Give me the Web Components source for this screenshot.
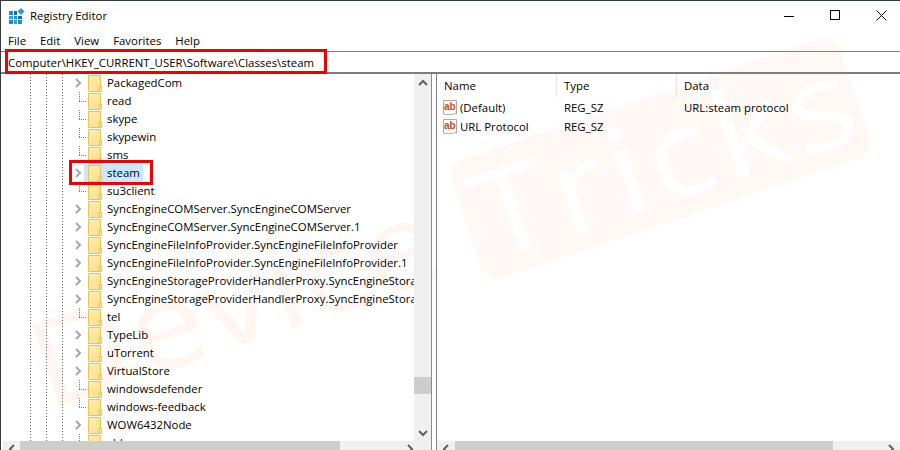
<!DOCTYPE html>
<html>
<head>
<meta charset="utf-8">
<title>Registry Editor</title>
<style>
  html, body { margin: 0; padding: 0; background: #fff; }
  body { font-family: "Open Sans", "Noto Sans", sans-serif; font-size: 11.4px; color: #000; }
</style>
</head>
<body>
<reg-window>
  <reg-watermark slot="watermark"></reg-watermark>
  <reg-titlebar slot="title" text="Registry Editor"></reg-titlebar>
  <reg-menubar slot="menu" items="File,Edit,View,Favorites,Help"></reg-menubar>
  <reg-address slot="address" path="Computer\HKEY_CURRENT_USER\Software\Classes\steam"></reg-address>
  <reg-tree slot="tree">
    <reg-tree-row expandable label="PackagedCom"></reg-tree-row>
    <reg-tree-row label="read"></reg-tree-row>
    <reg-tree-row label="skype"></reg-tree-row>
    <reg-tree-row label="skypewin"></reg-tree-row>
    <reg-tree-row label="sms"></reg-tree-row>
    <reg-tree-row expandable selected label="steam"></reg-tree-row>
    <reg-tree-row label="su3client"></reg-tree-row>
    <reg-tree-row expandable label="SyncEngineCOMServer.SyncEngineCOMServer"></reg-tree-row>
    <reg-tree-row expandable label="SyncEngineCOMServer.SyncEngineCOMServer.1"></reg-tree-row>
    <reg-tree-row expandable label="SyncEngineFileInfoProvider.SyncEngineFileInfoProvider"></reg-tree-row>
    <reg-tree-row expandable label="SyncEngineFileInfoProvider.SyncEngineFileInfoProvider.1"></reg-tree-row>
    <reg-tree-row expandable label="SyncEngineStorageProviderHandlerProxy.SyncEngineStorageProviderHandlerProxy"></reg-tree-row>
    <reg-tree-row expandable label="SyncEngineStorageProviderHandlerProxy.SyncEngineStorageProviderHandlerProxy.1"></reg-tree-row>
    <reg-tree-row label="tel"></reg-tree-row>
    <reg-tree-row expandable label="TypeLib"></reg-tree-row>
    <reg-tree-row expandable label="uTorrent"></reg-tree-row>
    <reg-tree-row expandable label="VirtualStore"></reg-tree-row>
    <reg-tree-row label="windowsdefender"></reg-tree-row>
    <reg-tree-row label="windows-feedback"></reg-tree-row>
    <reg-tree-row expandable label="WOW6432Node"></reg-tree-row>
    <reg-tree-row label="xbl"></reg-tree-row>
  </reg-tree>
  <reg-list slot="list">
    <reg-list-row name="(Default)" type="REG_SZ" data="URL:steam protocol"></reg-list-row>
    <reg-list-row name="URL Protocol" type="REG_SZ"></reg-list-row>
  </reg-list>
  <reg-callout slot="callouts" style="left:5px;top:49px;width:322px;height:25px"></reg-callout>
  <reg-callout slot="callouts" style="left:69px;top:160px;width:84px;height:25px"></reg-callout>
</reg-window>

<script>
const chevrons = {
    up: '<path d="M4 10 L8 6 L12 10"/>',
    down: '<path d="M4 6 L8 10 L12 6"/>',
    left: '<path d="M10 4 L6 8 L10 12"/>',
    right: '<path d="M6 4 L10 8 L6 12"/>'
};

class RegWindow extends HTMLElement {
    constructor() {
        super();
        this.attachShadow({ mode: 'open' }).innerHTML = `
        <style>
            :host { display: block; position: relative; width: 900px; height: 450px; overflow: hidden; background: #fff; }
            .frame { position: relative; display: flex; flex-direction: column; height: 450px; box-sizing: border-box; border-top: 1px solid #2f3b3b; border-left: 1px solid #3a3a3a; }
            .panes { display: flex; height: 376px; }
            .left { display: grid; grid-template-columns: 413px 17px; grid-template-rows: 367px 9px; width: 430px; border-right: 1px solid #8a8a92; overflow: hidden; }
            .gutter { width: 4px; }
            .right { display: grid; grid-template-columns: minmax(0, 1fr); grid-template-rows: 367px 9px; flex: 1; min-width: 0; border-left: 1px solid #7f8088; overflow: hidden; }
            .vbar { grid-column: 2; grid-row: 1; }
            .hleft { margin-left: 2px; grid-column: 1; grid-row: 2; }
            .corner { grid-column: 2; grid-row: 2; background: #f0f0f0; }
        </style>
        <slot name="watermark"></slot>
        <div class="frame">
            <slot name="title"></slot>
            <slot name="menu"></slot>
            <slot name="address"></slot>
            <div class="panes">
                <div class="left">
                    <slot name="tree"></slot>
                    <reg-scrollbar class="vbar" dir="v" before="286" thumb="17" end="17"></reg-scrollbar>
                    <reg-scrollbar class="hleft" dir="h" before="0" thumb="320" start="17" end="9"></reg-scrollbar>
                    <div class="corner"></div>
                </div>
                <div class="gutter"></div>
                <div class="right">
                    <slot name="list"></slot>
                    <reg-scrollbar dir="h" before="0" thumb="378" start="18" end="18"></reg-scrollbar>
                </div>
            </div>
        </div>
        <slot name="callouts"></slot>`;
    }
}

class RegWatermark extends HTMLElement {
    constructor() {
        super();
        this.attachShadow({ mode: 'open' }).innerHTML = `
        <style>
            :host { position: absolute; inset: 0; display: block; pointer-events: none; }
            text { font-family: "Open Sans", sans-serif; font-size: 120px; font-weight: 500; }
        </style>
        <svg width="900" height="450" viewBox="0 0 900 450">
            <g transform="translate(47 410) rotate(-18.5)">
                <rect x="457" y="-106" width="409" height="125" rx="16" fill="#fff8f4"/>
                <g transform="scale(1.15 1)">
                    <text x="0" y="0" fill="#fff6f1">Device</text>
                    <text x="406" y="0" fill="#fff" textLength="343" lengthAdjust="spacing">Tricks</text>
                </g>
            </g>
        </svg>`;
    }
}

class RegTitlebar extends HTMLElement {
    constructor() {
        super();
        this.attachShadow({ mode: 'open' }).innerHTML = `
        <style>
            :host { display: flex; align-items: center; height: 29px; }
            .icon { margin: 0 5px 0 8px; flex: none; }
            .text { flex: 1; }
            .btns { display: flex; align-items: center; margin-right: -4px; }
            .btn { width: 46px; display: flex; justify-content: center; }
            svg { display: block; }
        </style>
        <svg class="icon" width="16" height="16" viewBox="0 0 16 16" shape-rendering="crispEdges">
            <g fill="#1b8ed6">
                <rect x="0" y="3" width="3.6" height="3.6"/><rect x="4.6" y="3" width="3.6" height="3.6" fill="#0f6fb4"/>
                <rect x="0" y="7.6" width="3.6" height="3.6" fill="#2aa2e6"/><rect x="4.6" y="7.6" width="3.6" height="3.6"/><rect x="9.2" y="7.6" width="3.6" height="3.6" fill="#0f6fb4"/>
                <rect x="0" y="12.2" width="3.6" height="3.6"/><rect x="4.6" y="12.2" width="3.6" height="3.6" fill="#2aa2e6"/><rect x="9.2" y="12.2" width="3.6" height="3.6"/>
            </g>
            <path d="M12 0 L15.5 3.5 L12 7 L8.5 3.5 Z" fill="#3a93cf" shape-rendering="auto"/>
        </svg>
        <span class="text"></span>
        <div class="btns">
            <div class="btn"><svg width="10" height="10" viewBox="0 0 10 10" shape-rendering="crispEdges"><path d="M0 5.5 H10" stroke="#000" fill="none"/></svg></div>
            <div class="btn"><svg width="11" height="11" viewBox="0 0 11 11" shape-rendering="crispEdges"><rect x="0.5" y="0.5" width="9" height="9" stroke="#000" fill="none"/></svg></div>
            <div class="btn"><svg width="11" height="11" viewBox="0 0 11 11"><path d="M0.5 0.5 L10.5 10.5 M10.5 0.5 L0.5 10.5" stroke="#000" fill="none"/></svg></div>
        </div>`;
        this.shadowRoot.querySelector('.text').textContent = this.getAttribute('text');
    }
}

class RegMenubar extends HTMLElement {
    constructor() {
        super();
        this.attachShadow({ mode: 'open' }).innerHTML = `
        <style>
            :host { display: flex; align-items: center; height: 21px; padding-left: 7px; gap: 14px; }
            span { padding-bottom: 1px; }
        </style>`;
        for (const item of this.getAttribute('items').split(',')) {
            const s = document.createElement('span');
            s.textContent = item;
            this.shadowRoot.appendChild(s);
        }
    }
}

class RegAddress extends HTMLElement {
    constructor() {
        super();
        this.attachShadow({ mode: 'open' }).innerHTML = `
        <style>
            :host { display: flex; align-items: center; box-sizing: border-box; height: 23px; padding-left: 7px; border-top: 1px solid #808080; border-bottom: 2px solid #7d7d7d; }
        </style>
        <span></span>`;
        this.shadowRoot.querySelector('span').textContent = this.getAttribute('path');
    }
}

class RegTree extends HTMLElement {
    constructor() {
        super();
        this.attachShadow({ mode: 'open' }).innerHTML = `
        <style>
            :host {
                display: block; overflow: hidden; height: 367px; grid-column: 1; grid-row: 1;
                background-image:
                    repeating-linear-gradient(to bottom, #707070 0 1px, transparent 1px 3px),
                    repeating-linear-gradient(to bottom, #707070 0 1px, transparent 1px 3px),
                    repeating-linear-gradient(to bottom, #707070 0 1px, transparent 1px 3px);
                background-size: 1px 100%;
                background-position: 29px 0, 45px 0, 61px 0;
                background-repeat: no-repeat;
            }
        </style>
        <slot></slot>`;
    }
}

class RegTreeRow extends HTMLElement {
    constructor() {
        super();
        this.attachShadow({ mode: 'open' }).innerHTML = `
        <style>
            :host { display: flex; height: 18px; white-space: nowrap; position: relative; padding-left: 83px; }
            .toggle { position: absolute; left: 69px; top: 1px; }
            .leaf { position: absolute; left: 78px; top: 0; width: 7px; height: 10px;
                    background-image: repeating-linear-gradient(to bottom, #808080 0 1px, transparent 1px 2px),
                                      repeating-linear-gradient(to right, #808080 0 1px, transparent 1px 2px);
                    background-size: 1px 100%, 100% 1px;
                    background-position: 0 0, 0 9px;
                    background-repeat: no-repeat; }
            .item { display: flex; align-items: center; height: 18px; padding: 0 3px 0 4px; }
            :host([selected]) .item { background: #cce8ff; }
            .folder { flex: none; display: block; margin-right: 5px; }
            span { padding-bottom: 2px; }
        </style>
        <svg class="toggle" width="16" height="16" viewBox="0 0 16 16" fill="none" stroke="#a6a6a6" stroke-width="2"><path d="M6 4 L10 8 L6 12"/></svg>
        <div class="leaf"></div>
        <div class="item">
            <svg class="folder" width="14" height="17" viewBox="0 0 14 17">
                <defs><linearGradient id="f" x1="0" y1="0" x2="1" y2="1"><stop offset="0" stop-color="#ffeeb0"/><stop offset="1" stop-color="#fcdf85"/></linearGradient></defs>
                <path d="M0.5 0.5 H12.5 V11 H13.5 V16.5 H0.5 Z" fill="url(#f)" stroke="#e8c25a"/>
                <path d="M11 16 V11.5 H13" fill="none" stroke="#e8c25a"/>
            </svg>
            <span></span>
        </div>`;
        this.shadowRoot.querySelector('span').textContent = this.getAttribute('label');
        const exp = this.hasAttribute('expandable');
        this.shadowRoot.querySelector('.toggle').style.display = exp ? 'block' : 'none';
        this.shadowRoot.querySelector('.leaf').style.display = exp ? 'none' : 'block';
    }
}

class RegList extends HTMLElement {
    constructor() {
        super();
        this.attachShadow({ mode: 'open' }).innerHTML = `
        <style>
            :host { display: block; height: 367px; overflow: hidden; }
            .head { display: grid; grid-template-columns: 120px 120px 1fr; height: 23px; }
            .head span { display: flex; align-items: center; padding-left: 7px; border-right: 1px solid #e5e5e5; box-sizing: border-box; }
            .head span:last-child { border-right: 0; }
            .rows { margin-top: 1px; }
        </style>
        <div class="head"><span>Name</span><span>Type</span><span>Data</span></div>
        <div class="rows"><slot></slot></div>`;
    }
}

class RegListRow extends HTMLElement {
    constructor() {
        super();
        this.attachShadow({ mode: 'open' }).innerHTML = `
        <style>
            :host { display: grid; grid-template-columns: 120px 120px 1fr; height: 19px; align-items: center; white-space: nowrap; }
            .name { display: flex; align-items: center; padding-left: 5px; gap: 2px; }
            .type, .data { padding-left: 7px; }
            svg { display: block; flex: none; }
            text { font-family: "Liberation Sans", sans-serif; font-weight: bold; font-size: 10px; fill: #d5431c; }
        </style>
        <div class="name">
            <svg width="16" height="16" viewBox="0 0 16 16">
                <path d="M1.5 0.5 H14.5 V14 C12 12.5 11 15.5 8 14.5 C5 13.5 4 15.5 1.5 14 Z" fill="#fff" stroke="#a9a9a9"/>
                <text x="2" y="10">ab</text>
            </svg>
            <span class="n"></span>
        </div>
        <div class="type"></div>
        <div class="data"></div>`;
        this.shadowRoot.querySelector('.n').textContent = this.getAttribute('name');
        this.shadowRoot.querySelector('.type').textContent = this.getAttribute('type');
        this.shadowRoot.querySelector('.data').textContent = this.getAttribute('data') || '';
    }
}

class RegScrollbar extends HTMLElement {
    constructor() {
        super();
        const v = this.getAttribute('dir') === 'v';
        const start = this.getAttribute('start') || 17;
        const end = this.getAttribute('end') || 17;
        this.attachShadow({ mode: 'open' }).innerHTML = `
        <style>
            :host { display: flex; flex-direction: ${v ? 'column' : 'row'}; background: #f0f0f0; overflow: hidden; }
            .btn { flex: none; display: flex; align-items: ${v ? 'center' : 'flex-start'}; justify-content: center; ${v ? 'height' : 'width'}: ${start}px; }
            .btn.end { ${v ? 'height' : 'width'}: ${end}px; }
            .before { flex: none; ${v ? 'height' : 'width'}: ${this.getAttribute('before')}px; }
            .thumb { flex: none; background: #cdcdcd; ${v ? 'height' : 'width'}: ${this.getAttribute('thumb')}px; }
            .rest { flex: 1; }
            svg { display: block; flex: none; fill: none; stroke: #606060; stroke-width: 2; }
        </style>
        <div class="btn"><svg width="16" height="16" viewBox="0 0 16 16">${v ? chevrons.up : chevrons.left}</svg></div>
        <div class="before"></div>
        <div class="thumb"></div>
        <div class="rest"></div>
        <div class="btn end"><svg width="16" height="16" viewBox="0 0 16 16">${v ? chevrons.down : chevrons.right}</svg></div>`;
    }
}

class RegCallout extends HTMLElement {
    constructor() {
        super();
        this.attachShadow({ mode: 'open' }).innerHTML = `
        <style>
            :host { position: absolute; display: block; box-sizing: border-box; border: 3px solid #f00000; pointer-events: none; }
        </style>`;
    }
}

window.customElements.define('reg-window', RegWindow);
window.customElements.define('reg-watermark', RegWatermark);
window.customElements.define('reg-titlebar', RegTitlebar);
window.customElements.define('reg-menubar', RegMenubar);
window.customElements.define('reg-address', RegAddress);
window.customElements.define('reg-tree', RegTree);
window.customElements.define('reg-tree-row', RegTreeRow);
window.customElements.define('reg-list', RegList);
window.customElements.define('reg-list-row', RegListRow);
window.customElements.define('reg-scrollbar', RegScrollbar);
window.customElements.define('reg-callout', RegCallout);
</script>
</body>
</html>
